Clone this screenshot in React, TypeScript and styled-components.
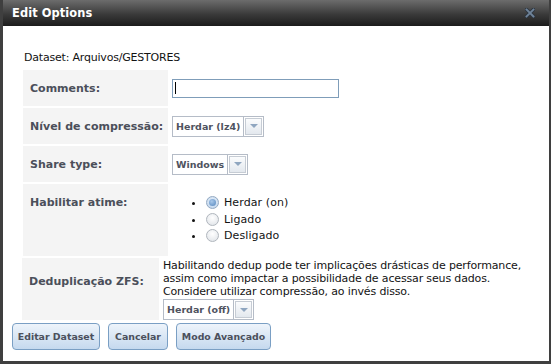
import styled, { createGlobalStyle } from 'styled-components'

const GlobalStyle = createGlobalStyle`
    html, body {
        margin: 0;
        padding: 0;
        background: #4a4a4a;
    }
    * {
        box-sizing: border-box;
    }
`

const Dialog = styled.div`
    width: 551px;
    height: 364px;
    display: flex;
    flex-direction: column;
    background: #ffffff;
    border-style: solid;
    border-color: #3f3f3f;
    border-width: 0 2px 3px 3px;
    font-family: "DejaVu Sans", Verdana, sans-serif;
    font-size: 11px;
    color: #131313;
    overflow: hidden;
`

const TitleBar = styled.div`
    height: 26px;
    flex: none;
    display: flex;
    align-items: center;
    justify-content: space-between;
    padding: 0 14px 0 9px;
    background: linear-gradient(#6c6c6c, #3a3a3a 55%, #1c1c1c);
`

const Title = styled.span`
    color: #ffffff;
    font-weight: bold;
    font-size: 11.4px;
    letter-spacing: 0.1px;
`

const Body = styled.div`
    flex: 1;
    display: flex;
    flex-direction: column;
    padding: 25px 0 0 9px;
`

const DatasetLine = styled.div`
    margin-left: 12px;
    line-height: 13px;
    letter-spacing: -0.2px;
`

const FormTable = styled.div<{ $top?: number; $left?: number }>`
    display: flex;
    flex-direction: column;
    gap: 2px;
    margin-top: ${p => p.$top ?? 0}px;
    margin-left: ${p => p.$left ?? 11}px;
    margin-right: 10px;
`

const FormRow = styled.div<{ $labelWidth?: number; $height: number }>`
    display: grid;
    grid-template-columns: ${p => p.$labelWidth ?? 145}px 1fr;
    column-gap: 4px;
    min-height: ${p => p.$height}px;
`

const LabelCell = styled.div<{ $top?: number }>`
    background: #f4f4f4;
    display: flex;
    align-items: ${p => (p.$top !== undefined ? 'flex-start' : 'center')};
    padding: ${p => p.$top ?? 0}px 0 0 7px;
    font-weight: bold;
    color: #4b4f5a;
`

const ValueCell = styled.div<{ $top?: number }>`
    display: flex;
    flex-direction: column;
    justify-content: ${p => (p.$top !== undefined ? 'flex-start' : 'center')};
    align-items: flex-start;
    padding-top: ${p => p.$top ?? 0}px;
`

const TextInput = styled.div`
    width: 167px;
    height: 19px;
    border: 1px solid #7f9db9;
    background: #fff;
    display: flex;
    align-items: center;
    padding-left: 2px;
`

const Caret = styled.span`
    width: 1px;
    height: 12px;
    background: #000;
`

const SelectBox = styled.div`
    display: inline-flex;
    align-items: stretch;
    height: 21px;
    border: 1px solid #b5bcc7;
    background: #fff;
`

const SelectText = styled.span`
    display: flex;
    align-items: center;
    padding: 0 3px 0 3px;
    font-weight: bold;
    font-size: 9.5px;
    color: #4f5360;
    border-right: 1px solid #b5bcc7;
`

const SelectArrow = styled.span`
    width: 17px;
    margin: 1px;
    border: 1px solid #c6ccd4;
    background: linear-gradient(#fbfcfd, #e3e8ee);
    display: flex;
    align-items: center;
    justify-content: center;
    &::after {
        content: '';
        border-left: 4px solid transparent;
        border-right: 4px solid transparent;
        border-top: 4px solid #8fa6c0;
    }
`

const RadioList = styled.ul`
    margin: 0;
    padding: 0 0 0 33px;
    list-style: disc;
    letter-spacing: 0.1px;
`

const RadioItem = styled.li`
    height: 16.5px;
    line-height: 16.5px;
`

const Radio = styled.span<{ $checked?: boolean }>`
    display: inline-block;
    position: relative;
    width: 13px;
    height: 13px;
    margin: 0 5px 0 1px;
    vertical-align: -3px;
    border-radius: 50%;
    border: 1px solid ${p => (p.$checked ? '#93a9c2' : '#b0b6bd')};
    background: ${p =>
        p.$checked
            ? 'radial-gradient(circle at 50% 40%, #eaf2fb, #bcd2ea)'
            : 'radial-gradient(circle at 50% 35%, #ffffff, #dde1e6)'};
    &::after {
        content: '';
        display: ${p => (p.$checked ? 'block' : 'none')};
        position: absolute;
        left: 2px;
        top: 2px;
        width: 7px;
        height: 7px;
        border-radius: 50%;
        background: radial-gradient(circle at 40% 35%, #a9c8ea, #5486bd);
    }
`

const HelpText = styled.div`
    line-height: 13px;
    letter-spacing: -0.15px;
    margin-bottom: 1px;
`

const ButtonBar = styled.div`
    display: flex;
    gap: 8px;
    margin-top: 3px;
`

const Button = styled.button<{ $width: number }>`
    width: ${p => p.$width}px;
    height: 27px;
    border: 1px solid #7a9fc4;
    border-radius: 4px;
    background: linear-gradient(#eef4fb, #c5d9ee);
    font-family: "DejaVu Sans", Verdana, sans-serif;
    font-weight: bold;
    font-size: 9.4px;
    color: #4b505c;
    padding: 0;
    cursor: pointer;
`

const CloseIcon = () => (
    <svg width="10" height="10" viewBox="0 0 10 10">
        <path d="M1.5 1.5 L8.5 8.5 M8.5 1.5 L1.5 8.5" stroke="#2d3641" strokeWidth="3.6" strokeLinecap="square" />
        <path d="M1.5 1.5 L8.5 8.5 M8.5 1.5 L1.5 8.5" stroke="#6f8399" strokeWidth="1.8" strokeLinecap="square" />
    </svg>
)

const Select = ({ value }: { value: string }) => (
    <SelectBox>
        <SelectText>{value}</SelectText>
        <SelectArrow />
    </SelectBox>
)

const atimeOptions = [
    { label: 'Herdar (on)', checked: true },
    { label: 'Ligado', checked: false },
    { label: 'Desligado', checked: false },
]

export default function App() {
    return (
        <>
            <GlobalStyle />
            <Dialog>
                <TitleBar>
                    <Title>Edit Options</Title>
                    <CloseIcon />
                </TitleBar>
                <Body>
                    <DatasetLine>Dataset: Arquivos/GESTORES</DatasetLine>
                    <FormTable $top={6}>
                        <FormRow $height={36}>
                            <LabelCell>Comments:</LabelCell>
                            <ValueCell>
                                <TextInput><Caret /></TextInput>
                            </ValueCell>
                        </FormRow>
                        <FormRow $height={36}>
                            <LabelCell>Nível de compressão:</LabelCell>
                            <ValueCell>
                                <Select value="Herdar (lz4)" />
                            </ValueCell>
                        </FormRow>
                        <FormRow $height={36}>
                            <LabelCell>Share type:</LabelCell>
                            <ValueCell>
                                <Select value="Windows" />
                            </ValueCell>
                        </FormRow>
                        <FormRow $height={72}>
                            <LabelCell $top={12}>Habilitar atime:</LabelCell>
                            <ValueCell $top={11}>
                                <RadioList>
                                    {atimeOptions.map(opt => (
                                        <RadioItem key={opt.label}>
                                            <Radio $checked={opt.checked} />
                                            {opt.label}
                                        </RadioItem>
                                    ))}
                                </RadioList>
                            </ValueCell>
                        </FormRow>
                    </FormTable>
                    <FormTable $top={2} $left={10}>
                        <FormRow $height={61} $labelWidth={137}>
                            <LabelCell $top={17}>Deduplicação ZFS:</LabelCell>
                            <ValueCell $top={1}>
                                <HelpText>
                                    Habilitando dedup pode ter implicações drásticas de performance,<br />
                                    assim como impactar a possibilidade de acessar seus dados.<br />
                                    Considere utilizar compressão, ao invés disso.
                                </HelpText>
                                <Select value="Herdar (off)" />
                            </ValueCell>
                        </FormRow>
                    </FormTable>
                    <ButtonBar>
                        <Button $width={88}>Editar Dataset</Button>
                        <Button $width={60}>Cancelar</Button>
                        <Button $width={95}>Modo Avançado</Button>
                    </ButtonBar>
                </Body>
            </Dialog>
        </>
    )
}
